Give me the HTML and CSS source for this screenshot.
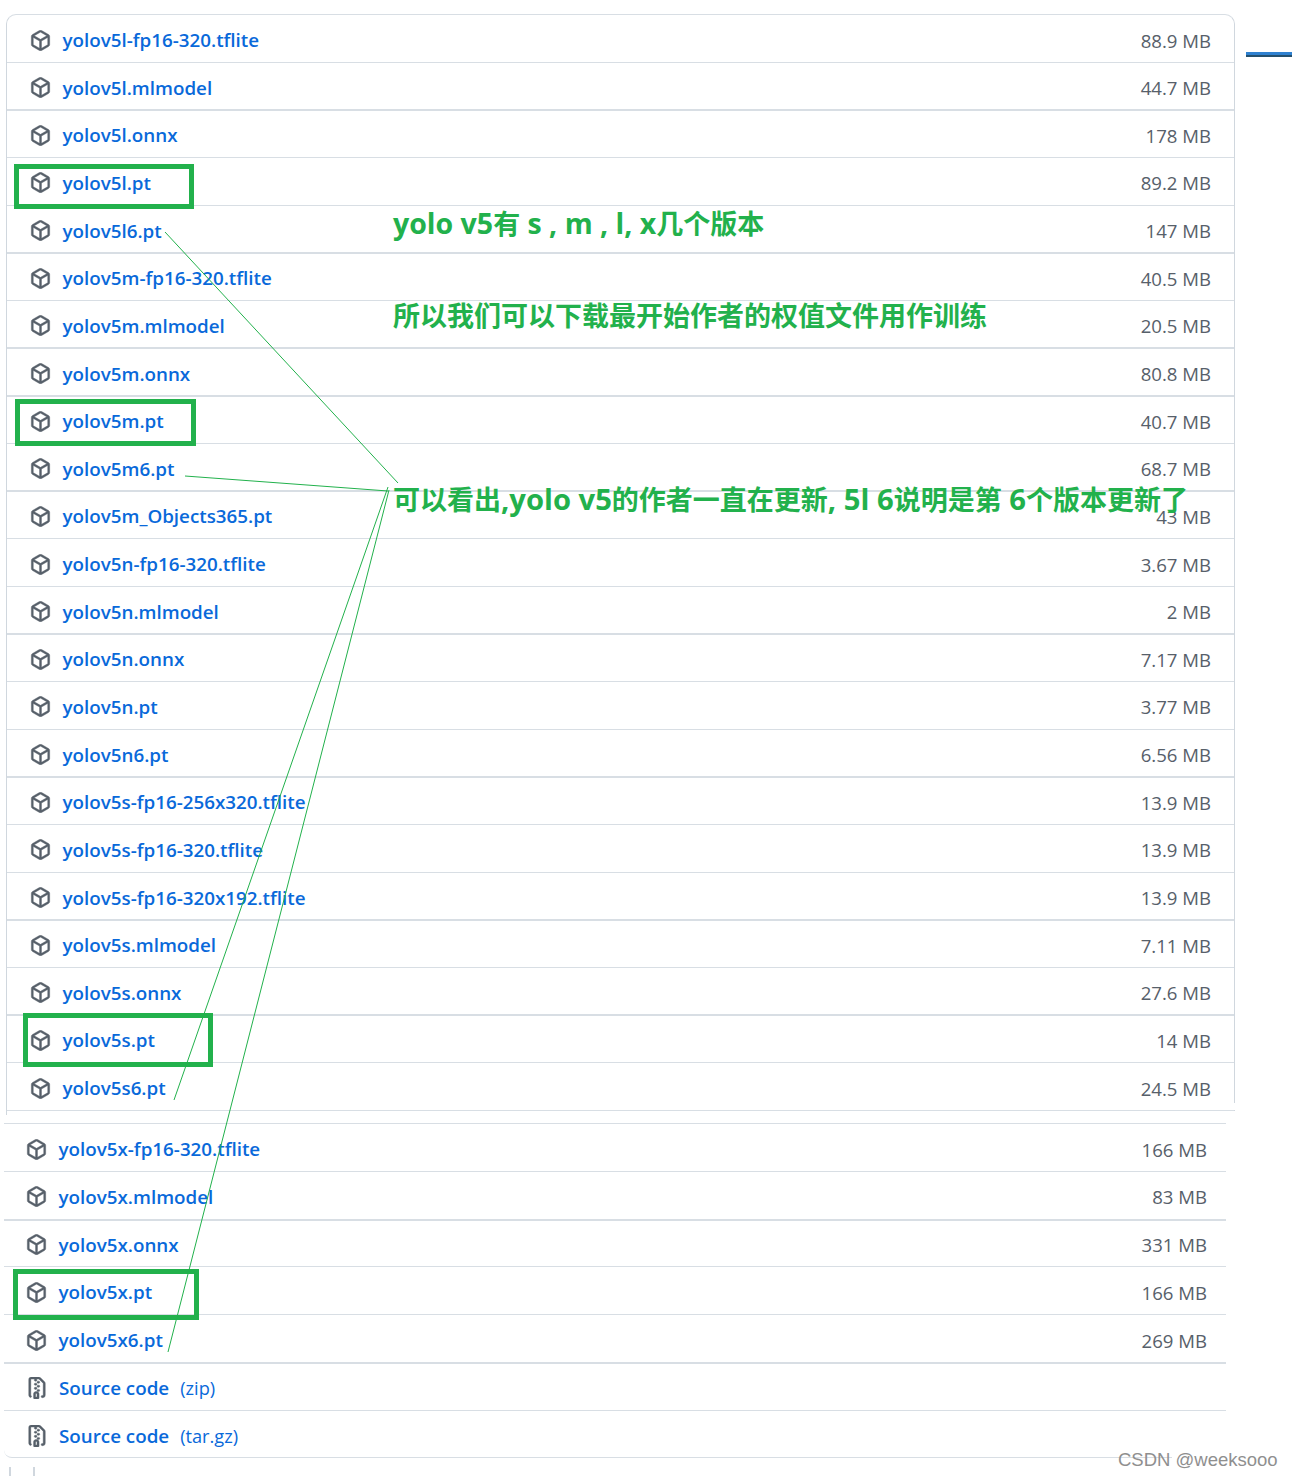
FILE: index.html
```html
<!DOCTYPE html>
<html lang="zh-CN">
<head>
    <meta charset="UTF-8">
    <meta name="viewport" content="width=device-width, initial-scale=1.0">
    <title>yolov5 assets</title>
    <link rel="stylesheet" href="styles.css">
</head>
<body>
    <svg class="icon-defs" width="0" height="0">
        <symbol id="pkg" viewBox="0 0 16 16"><path fill-rule="evenodd" d="M8.878.392a1.75 1.75 0 0 0-1.756 0l-5.25 3.045A1.75 1.75 0 0 0 1 4.951v6.098c0 .624.332 1.2.872 1.514l5.25 3.045a1.75 1.75 0 0 0 1.756 0l5.25-3.045c.54-.313.872-.89.872-1.514V4.951c0-.624-.332-1.2-.872-1.514L8.878.392ZM7.875 1.69a.25.25 0 0 1 .25 0l4.63 2.685L8 7.133 3.245 4.375l4.63-2.685ZM2.5 5.677v5.372c0 .09.047.171.125.216l4.625 2.683V8.432Zm6.25 8.271 4.625-2.683a.25.25 0 0 0 .125-.216V5.677L8.75 8.432Z"/></symbol>
        <symbol id="zip" viewBox="0 0 16 16"><path d="M3.5 1.75v11.5c0 .09.048.173.126.217a.75.75 0 0 1-.752 1.298A1.748 1.748 0 0 1 2 13.25V1.75C2 .784 2.784 0 3.75 0h5.586c.464 0 .909.185 1.237.513l2.914 2.914c.329.328.513.773.513 1.237v8.586A1.75 1.75 0 0 1 12.25 15h-.5a.75.75 0 0 1 0-1.5h.5a.25.25 0 0 0 .25-.25V4.664a.25.25 0 0 0-.073-.177L9.513 1.573a.25.25 0 0 0-.177-.073H7.25a.75.75 0 0 1 0 1.5h-.5a.75.75 0 0 1 0-1.5h-3a.25.25 0 0 0-.25.25Zm3.75 8.75h.5c.966 0 1.75.784 1.75 1.75v3a.75.75 0 0 1-.75.75h-2.5a.75.75 0 0 1-.75-.75v-3c0-.966.784-1.75 1.75-1.75ZM6 5.25a.75.75 0 0 1 .75-.75h.5a.75.75 0 0 1 0 1.5h-.5A.75.75 0 0 1 6 5.25Zm.75 2.25h.5a.75.75 0 0 1 0 1.5h-.5a.75.75 0 0 1 0-1.5ZM8 6.75A.75.75 0 0 1 8.75 6h.5a.75.75 0 0 1 0 1.5h-.5A.75.75 0 0 1 8 6.75ZM8.75 3h.5a.75.75 0 0 1 0 1.5h-.5a.75.75 0 0 1 0-1.5ZM8 9.75A.75.75 0 0 1 8.75 9h.5a.75.75 0 0 1 0 1.5h-.5A.75.75 0 0 1 8 9.75Zm-1 2.5v2.25h1v-2.25a.25.25 0 0 0-.25-.25h-.5a.25.25 0 0 0-.25.25Z"/></symbol>
    </svg>

    <ul class="assets assets-top">
        <li class="row"><svg class="icon"><use href="#pkg"/></svg><a href="#">yolov5l-fp16-320.tflite</a><span class="size">88.9 MB</span></li>
        <li class="row thick"><svg class="icon"><use href="#pkg"/></svg><a href="#">yolov5l.mlmodel</a><span class="size">44.7 MB</span></li>
        <li class="row"><svg class="icon"><use href="#pkg"/></svg><a href="#">yolov5l.onnx</a><span class="size">178 MB</span></li>
        <li class="row"><svg class="icon"><use href="#pkg"/></svg><a href="#">yolov5l.pt</a><span class="size">89.2 MB</span></li>
        <li class="row thick"><svg class="icon"><use href="#pkg"/></svg><a href="#">yolov5l6.pt</a><span class="size">147 MB</span></li>
        <li class="row"><svg class="icon"><use href="#pkg"/></svg><a href="#">yolov5m-fp16-320.tflite</a><span class="size">40.5 MB</span></li>
        <li class="row thick"><svg class="icon"><use href="#pkg"/></svg><a href="#">yolov5m.mlmodel</a><span class="size">20.5 MB</span></li>
        <li class="row thick"><svg class="icon"><use href="#pkg"/></svg><a href="#">yolov5m.onnx</a><span class="size">80.8 MB</span></li>
        <li class="row"><svg class="icon"><use href="#pkg"/></svg><a href="#">yolov5m.pt</a><span class="size">40.7 MB</span></li>
        <li class="row thick"><svg class="icon"><use href="#pkg"/></svg><a href="#">yolov5m6.pt</a><span class="size">68.7 MB</span></li>
        <li class="row"><svg class="icon"><use href="#pkg"/></svg><a href="#">yolov5m_Objects365.pt</a><span class="size">43 MB</span></li>
        <li class="row"><svg class="icon"><use href="#pkg"/></svg><a href="#">yolov5n-fp16-320.tflite</a><span class="size">3.67 MB</span></li>
        <li class="row thick"><svg class="icon"><use href="#pkg"/></svg><a href="#">yolov5n.mlmodel</a><span class="size">2 MB</span></li>
        <li class="row"><svg class="icon"><use href="#pkg"/></svg><a href="#">yolov5n.onnx</a><span class="size">7.17 MB</span></li>
        <li class="row"><svg class="icon"><use href="#pkg"/></svg><a href="#">yolov5n.pt</a><span class="size">3.77 MB</span></li>
        <li class="row thick"><svg class="icon"><use href="#pkg"/></svg><a href="#">yolov5n6.pt</a><span class="size">6.56 MB</span></li>
        <li class="row"><svg class="icon"><use href="#pkg"/></svg><a href="#">yolov5s-fp16-256x320.tflite</a><span class="size">13.9 MB</span></li>
        <li class="row"><svg class="icon"><use href="#pkg"/></svg><a href="#">yolov5s-fp16-320.tflite</a><span class="size">13.9 MB</span></li>
        <li class="row thick"><svg class="icon"><use href="#pkg"/></svg><a href="#">yolov5s-fp16-320x192.tflite</a><span class="size">13.9 MB</span></li>
        <li class="row"><svg class="icon"><use href="#pkg"/></svg><a href="#">yolov5s.mlmodel</a><span class="size">7.11 MB</span></li>
        <li class="row thick"><svg class="icon"><use href="#pkg"/></svg><a href="#">yolov5s.onnx</a><span class="size">27.6 MB</span></li>
        <li class="row"><svg class="icon"><use href="#pkg"/></svg><a href="#">yolov5s.pt</a><span class="size">14 MB</span></li>
        <li class="row"><svg class="icon"><use href="#pkg"/></svg><a href="#">yolov5s6.pt</a><span class="size">24.5 MB</span></li>
    </ul>

    <ul class="assets assets-bottom">
        <li class="row"><svg class="icon"><use href="#pkg"/></svg><a href="#">yolov5x-fp16-320.tflite</a><span class="size">166 MB</span></li>
        <li class="row thick"><svg class="icon"><use href="#pkg"/></svg><a href="#">yolov5x.mlmodel</a><span class="size">83 MB</span></li>
        <li class="row"><svg class="icon"><use href="#pkg"/></svg><a href="#">yolov5x.onnx</a><span class="size">331 MB</span></li>
        <li class="row"><svg class="icon"><use href="#pkg"/></svg><a href="#">yolov5x.pt</a><span class="size">166 MB</span></li>
        <li class="row thick"><svg class="icon"><use href="#pkg"/></svg><a href="#">yolov5x6.pt</a><span class="size">269 MB</span></li>
        <li class="row"><svg class="icon icon-zip"><use href="#zip"/></svg><a href="#">Source code</a><span class="ext">(zip)</span></li>
        <li class="row"><svg class="icon icon-zip"><use href="#zip"/></svg><a href="#">Source code</a><span class="ext">(tar.gz)</span></li>
    </ul>

    <div class="tick-row"><i class="tick"></i><i class="tick"></i></div>

    <!-- 截图上的标注 -->
    <div class="side-tab"></div>
    <div class="mark mark-l"></div>
    <div class="mark mark-m"></div>
    <div class="mark mark-s"></div>
    <div class="mark mark-x"></div>

    <svg class="leaders" width="1292" height="1476" viewBox="0 0 1292 1476">
        <line x1="165" y1="232" x2="398" y2="483"/>
        <line x1="185" y1="476" x2="388" y2="491"/>
        <line x1="388" y1="487" x2="174" y2="1100"/>
        <line x1="389" y1="490" x2="168" y2="1352"/>
    </svg>

    <p class="note note-1"><span class="latin">yolo v5</span>有<span class="latin"> s , m , l, x</span>几个版本</p>
    <p class="note note-2">所以我们可以下载最开始作者的权值文件用作训练</p>
    <p class="note note-3">可以看出<span class="latin">,yolo v5</span>的作者一直在更新<span class="latin">, 5l 6</span>说明是第<span class="latin"> 6</span>个版本更新了</p>
    <div class="watermark">CSDN @weeksooo</div>
</body>
</html>
```

FILE: styles.css
```css
html, body {
    margin: 0;
    padding: 0;
    background: #fff;
}
body {
    position: relative;
    width: 1292px;
    height: 1476px;
    overflow: hidden;
    font-family: "Open Sans", "Noto Sans", sans-serif;
    font-size: 18.8px;
}
.icon-defs {
    position: absolute;
}
.assets {
    list-style: none;
    margin: 0;
    padding: 0;
}
.assets-top {
    position: relative;
    box-sizing: border-box;
    width: 1229px;
    height: 1097px;
    margin: 14px 0 0 6px;
    border-top: 1px solid #d8dee4;
    border-left: 1px solid #d0d7de;
    border-right: 1px solid #d0d7de;
    border-radius: 10px 10px 0 0;
}
/* левая рамка торчит ниже таблицы, правая обрезана */
.assets-top::before {
    content: "";
    position: absolute;
    left: -1px;
    bottom: -4px;
    width: 1px;
    height: 4px;
    background: #d0d7de;
}
.assets-top::after {
    content: "";
    position: absolute;
    right: -1px;
    bottom: 1px;
    width: 1px;
    height: 7px;
    background: #fff;
}
.assets-bottom {
    box-sizing: border-box;
    width: 1222px;
    margin: 12px 0 0 4px;
    border-top: 1px solid #d8dee4;
}
.row {
    box-sizing: border-box;
    display: flex;
    align-items: center;
    height: 47.65px;
    padding: 3.4px 23px 0 23px;
    border-bottom: 1px solid #d8dee4;
}
.row.thick {
    box-shadow: 0 1px 0 #d8dee4;
}
.assets-bottom .row {
    height: 47.75px;
    padding-right: 19px;
    padding-left: 22px;
}
.assets-bottom .row:last-child {
    border-bottom-left-radius: 8px;
}
.icon {
    flex: none;
    width: 21px;
    height: 21px;
    margin-right: 11.5px;
    fill: #57606a;
    stroke: #57606a;
    stroke-width: 0.3px;
}
.icon-zip {
    width: 22px;
    height: 22px;
    margin-right: 11px;
}
.row a {
    color: #0969da;
    text-decoration: none;
    font-weight: 600;
    white-space: nowrap;
}
.size {
    margin-left: auto;
    color: #57606a;
    font-size: 18.6px;
}
.ext {
    margin-left: 11px;
    color: #0969da;
    font-size: 18.2px;
}
.tick-row {
    display: flex;
    gap: 22px;
    margin: 9px 0 0 9px;
}
.tick {
    width: 2px;
    height: 9px;
    background: #d0d7de;
}
.side-tab {
    position: absolute;
    left: 1246px;
    top: 52px;
    width: 46px;
    height: 5px;
    box-sizing: border-box;
    background: #2f81d0;
    border-bottom: 2px solid #24506f;
}
.mark {
    position: absolute;
    box-sizing: border-box;
    border: 5px solid #22b14c;
}
.mark-l {
    left: 14px;
    top: 164px;
    width: 180px;
    height: 45px;
}
.mark-m {
    left: 15px;
    top: 399px;
    width: 181px;
    height: 47px;
}
.mark-s {
    left: 23px;
    top: 1013px;
    width: 190px;
    height: 54px;
}
.mark-x {
    left: 13px;
    top: 1269px;
    width: 186px;
    height: 51px;
}
.leaders {
    position: absolute;
    left: 0;
    top: 0;
    pointer-events: none;
}
.leaders line {
    stroke: #22b14c;
    stroke-width: 1;
}
.note {
    position: absolute;
    left: 393px;
    margin: 0;
    color: #22b14c;
    font-family: "Open Sans", "Noto Sans CJK SC", sans-serif;
    font-size: 27px;
    font-weight: 700;
    line-height: 36px;
    white-space: nowrap;
}
.note .latin {
    font-size: 28.5px;
}
.note-1 {
    top: 205px;
}
.note-2 {
    top: 298px;
}
.note-3 {
    top: 481px;
}
.note-3 .latin {
    font-size: 29.2px;
}
.watermark {
    position: absolute;
    left: 1118px;
    top: 1448px;
    padding-right: 4px;
    color: #8f8f8f;
    font-family: "Liberation Sans", sans-serif;
    font-size: 18.5px;
    line-height: 24px;
    white-space: nowrap;
    background: linear-gradient(to right, transparent 54px, #fff 54px);
}
```
